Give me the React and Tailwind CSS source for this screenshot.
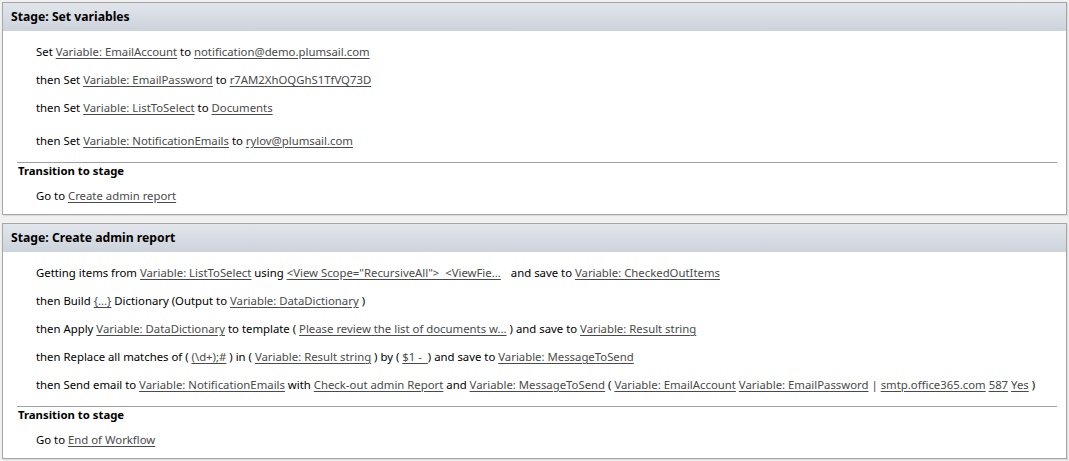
import React from "react";

// Workflow stages view (SharePoint Designer style)

function L({ children }) {
  return <span className="text-[#4a4a4a] underline underline-offset-2 decoration-[#4a4a4a]">{children}</span>;
}

function Row({ children, className = "" }) {
  return <div className={"h-[28px] leading-[28px] pl-[33px] whitespace-nowrap " + className}>{children}</div>;
}

function Stage({ title, children, goTo }) {
  return (
    <div className="mx-[2px] border border-[#a6a6a6] bg-white shadow-[1px_1px_1px_rgba(0,0,0,0.08)]">
      <div className="h-[28px] flex items-center pl-[8px] pt-[1px] bg-gradient-to-b from-[#e2e6ec] to-[#cdd3db] font-bold text-[12.2px] text-black">
        {title}
      </div>
      <div className="pt-[7px]">{children}</div>
      <div className="ml-[14px] mr-[9px] mt-[7px] border-t border-[#a0a0a0]" />
      <div className="h-[16px] leading-[16px] pl-[15px] font-bold text-black">Transition to stage</div>
      <div className="pl-[33px] pt-[9px] pb-[10px] leading-[16px]">
        Go to <L>{goTo}</L>
      </div>
    </div>
  );
}

export default function App() {
  return (
    <div
      className="w-[1069px] h-[461px] bg-[#f0f0f0] pt-[2px] text-[11.35px] text-black overflow-hidden"
      style={{ fontFamily: '"Noto Sans", "Open Sans", sans-serif' }}
    >
      <Stage title="Stage: Set variables" goTo="Create admin report">
        <Row>Set <L>Variable: EmailAccount</L> to <L>notification@demo.plumsail.com</L></Row>
        <Row>then Set <L>Variable: EmailPassword</L> to <L>r7AM2XhOQGhS1TfVQ73D</L></Row>
        <Row>then Set <L>Variable: ListToSelect</L> to <L>Documents</L></Row>
        <Row className="mt-[5px]">then Set <L>Variable: NotificationEmails</L> to <L>rylov@plumsail.com</L></Row>
      </Stage>
      <div className="h-[8px]" />
      <Stage title="Stage: Create admin report" goTo="End of Workflow">
        <Row>
          Getting items from <L>Variable: ListToSelect</L> using <L>{'<View Scope="RecursiveAll">\u00a0\u00a0<ViewFie...'}</L>
          <span className="ml-[10px]">and save to </span><L>Variable: CheckedOutItems</L>
        </Row>
        <Row>then Build <L>{"{...}"}</L> Dictionary (Output to <L>Variable: DataDictionary</L> )</Row>
        <Row>
          then Apply <L>Variable: DataDictionary</L> to template ( <L>Please review the list of documents w...</L> ) and save to{" "}
          <L>Variable: Result string</L>
        </Row>
        <Row>
          then Replace all matches of ( <L>{"(\\d+);#"}</L> ) in ( <L>Variable: Result string</L> ) by ({" "}
          <L>{"$1 -\u00a0\u00a0"}</L>) and save to <L>Variable: MessageToSend</L>
        </Row>
        <Row>
          then Send email to <L>Variable: NotificationEmails</L> with <L>Check-out admin Report</L> and{" "}
          <L>Variable: MessageToSend</L> ( <L>Variable: EmailAccount</L> <L>Variable: EmailPassword</L>{" "}
          <span className="text-[#5a2a6a]">|</span> <L>smtp.office365.com</L> <L>587</L> <L>Yes</L> )
        </Row>
      </Stage>
    </div>
  );
}
